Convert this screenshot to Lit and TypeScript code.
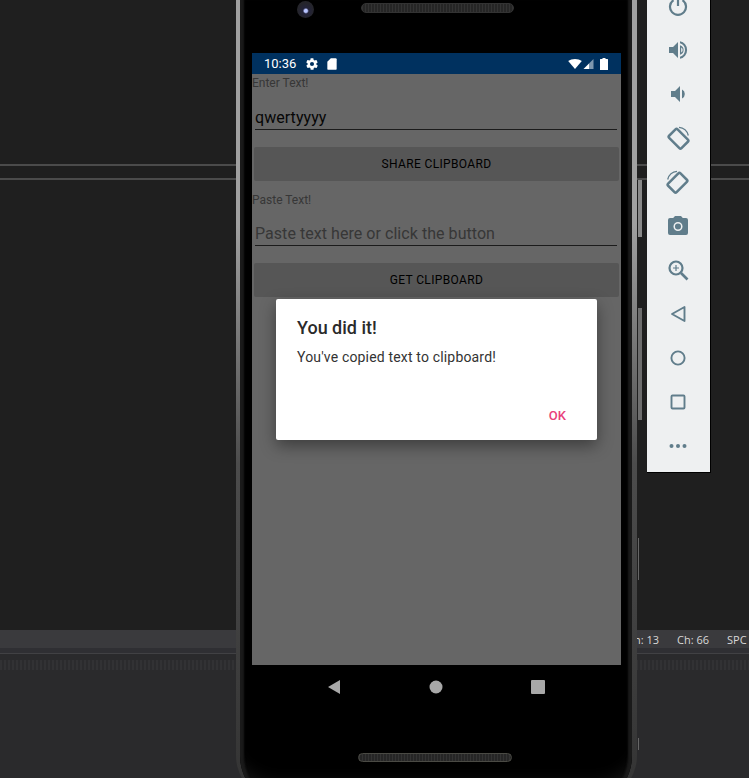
import { LitElement, html, css, svg } from 'lit';
import { customElement } from 'lit/decorators.js';

const rotate = (flip: boolean) => svg`
  <g transform=${flip ? 'translate(24 0) scale(-1 1)' : ''}>
    <rect x="6.500" y="4" width="12" height="17.500" rx="1.500" fill="none" stroke="currentColor" stroke-width="2.500" transform="rotate(-45 12.500 12.750)"/>
    <path d="M13 1.300c4.500.4 8.300 3.700 9.300 8.200" fill="none" stroke="currentColor" stroke-width="1.300"/>
  </g>`;

const toolIcons = [
  svg`<path d="M12 3v9" stroke="currentColor" stroke-width="2.200" fill="none"/><path d="M7.500 6.200a8 8 0 1 0 9 0" stroke="currentColor" stroke-width="2.200" fill="none"/>`,
  svg`<path d="M3 9v6h4l5 5V4L7 9z" fill="currentColor"/><path d="M14 7.200v9.600a5 5 0 0 0 0-9.600zM14 3.200v2.100a7 7 0 0 1 0 13.400v2.100a9 9 0 0 0 0-17.600z" fill="currentColor"/><path d="M15.200 9.400a3 3 0 0 1 0 5.200z" fill="#eef0f1"/>`,
  svg`<path d="M5 9v6h4l5 5V4L9 9z" fill="currentColor"/><path d="M16 7.500v9a5 5 0 0 0 0-9z" fill="currentColor"/>`,
  rotate(false),
  rotate(true),
  svg`<path d="M9 2 7.200 4H4a2 2 0 0 0-2 2v13a2 2 0 0 0 2 2h16a2 2 0 0 0 2-2V6a2 2 0 0 0-2-2h-3.200L15 2z" fill="currentColor"/><circle cx="12" cy="12.500" r="3.800" fill="none" stroke="#eef0f1" stroke-width="1.500"/>`,
  svg`<circle cx="10" cy="10" r="6.500" fill="none" stroke="currentColor" stroke-width="2.200"/><path d="m15 15 6.500 6.500" stroke="currentColor" stroke-width="2.600" fill="none"/><path d="M10 7v6M7 10h6" stroke="currentColor" stroke-width="1.200" fill="none"/>`,
  svg`<path d="M18.500 5v14L6 12z" fill="none" stroke="currentColor" stroke-width="1.900" stroke-linejoin="round"/>`,
  svg`<circle cx="12" cy="12" r="6.600" fill="none" stroke="currentColor" stroke-width="1.900"/>`,
  svg`<rect x="5.500" y="5.500" width="13" height="13" rx="1" fill="none" stroke="currentColor" stroke-width="1.900"/>`,
  svg`<circle cx="5.500" cy="12" r="2" fill="currentColor"/><circle cx="12" cy="12" r="2" fill="currentColor"/><circle cx="18.500" cy="12" r="2" fill="currentColor"/>`,
];

@customElement('app-root')
export class AppRoot extends LitElement {
  static styles = css`
    :host {
      display: block;
      font-family: Roboto, "Liberation Sans", sans-serif;
    }

    .desk {
      position: relative;
      width: 749px;
      height: 778px;
      overflow: hidden;
      background: #1f1f1f;
      display: flex;
      flex-direction: column;
    }

    /* ide behind the emulator */
    .rule {
      height: 2px;
      background: #4b4b4b;
      margin-top: 12px;
    }
    .rule.first {
      margin-top: 164px;
    }
    .ide-gap {
      flex: 1;
    }
    .ide-status {
      height: 18px;
      background: #3a3a3d;
      display: flex;
      justify-content: flex-end;
      align-items: center;
      gap: 18px;
      color: #d8d8d8;
      font: 11px "Open Sans", sans-serif;
    }
    .ide-status .spc {
      width: 22px;
      white-space: nowrap;
      overflow: hidden;
    }
    .ide-panel {
      height: 130px;
      background: #2a2a2c;
      display: flex;
      flex-direction: column;
    }
    .ide-panel .tab {
      height: 5px;
      background: #2f2f33;
      border-bottom: 1px solid #414144;
    }
    .ide-panel .hatch {
      height: 10px;
      margin-top: 6px;
      background: repeating-linear-gradient(90deg, #323234 0 2px, #2b2b2d 2px 4px);
    }

    /* emulator window */
    .phone {
      position: absolute;
      left: 236px;
      top: 0;
      width: 401px;
      height: 800px;
      box-sizing: border-box;
      padding: 0 12px;
      border-style: solid;
      border-color: transparent;
      border-width: 0 5px 0 4px;
      border-radius: 0 0 44px 44px;
      background:
        linear-gradient(#000, #000) padding-box,
        linear-gradient(#a0a0a0 0 28%, #4c4c4c 58%, #333 100%) border-box;
      box-shadow:
        inset 5px 0 2px -1px #1a1a1a,
        inset -5px 0 2px -1px #1a1a1a,
        inset 0 -34px 18px -18px #161616;
      display: flex;
      flex-direction: column;
    }
    .phone-top {
      height: 53px;
      position: relative;
    }
    .speaker {
      position: absolute;
      background: repeating-linear-gradient(90deg, #333 0 1px, #262626 1px 3px);
      border: 1px solid #333;
      border-radius: 5px;
      box-sizing: border-box;
    }
    .speaker.top {
      left: 109px;
      top: 3px;
      width: 153px;
      height: 10px;
    }
    .speaker.bottom {
      left: 106px;
      top: 44px;
      width: 154px;
      height: 9px;
      border-color: #4a4a44;
    }
    .camera {
      position: absolute;
      left: 45px;
      top: 1px;
      width: 17px;
      height: 17px;
      border-radius: 50%;
      background: radial-gradient(circle at 52% 58%, #b8c4ff 0 1.5px, #23233a 3px, #25252b 8px);
    }

    .statusbar {
      width: 369px;
      height: 21px;
      flex: none;
      background: #00315f;
      color: #fff;
      display: flex;
      align-items: center;
      box-sizing: border-box;
      padding: 0 12px;
      font-size: 13px;
    }
    .statusbar svg {
      display: block;
      fill: #fff;
    }
    .statusbar .time {
      margin-right: 9px;
    }
    .statusbar .sd {
      margin-left: 6px;
    }
    .statusbar .signal {
      margin-left: 1px;
    }
    .statusbar .battery {
      margin: 0 1px 0 6px;
    }
    .statusbar .push {
      flex: 1;
    }

    .screen {
      position: relative;
      width: 369px;
      height: 591px;
      flex: none;
      background: #fff;
      display: flex;
      flex-direction: column;
    }
    .label {
      font-size: 12px;
      line-height: 16px;
      color: #8a8a8a;
    }
    .label.first {
      margin-top: 1px;
    }
    .label.second {
      margin-top: 11px;
    }
    .field {
      margin: 13px 4px 0 3px;
      height: 26px;
      box-sizing: border-box;
      padding-top: 1px;
      border-bottom: 1px solid #444;
      font-size: 16px;
      line-height: 26px;
      letter-spacing: 0.05px;
      color: #111;
    }
    .field.hint {
      margin-top: 12px;
      color: #8a8a8a;
    }
    .btn {
      margin: 17px 2px 0 2px;
      height: 34px;
      background: #d6d6d6;
      border-radius: 2px;
      display: flex;
      align-items: center;
      justify-content: center;
      font-size: 12px;
      letter-spacing: 0.35px;
      color: #000;
    }
    .scrim {
      position: absolute;
      inset: 0;
      background: rgba(0, 0, 0, 0.6);
    }
    .dialog {
      position: absolute;
      left: 24px;
      top: 225px;
      width: 321px;
      height: 141px;
      box-sizing: border-box;
      padding: 17px 21px 0;
      background: #fff;
      border-radius: 2px;
      box-shadow: 0 6px 16px rgba(0, 0, 0, 0.4);
      display: flex;
      flex-direction: column;
    }
    .dialog h2 {
      margin: 0;
      font-size: 18px;
      line-height: 24px;
      font-weight: 500;
      color: #2a2a2a;
    }
    .dialog p {
      margin: 7px 0 0;
      font-size: 14px;
      line-height: 20px;
      letter-spacing: 0.17px;
      color: #333;
    }
    .dialog .ok {
      margin: 41px 10px 0 0;
      align-self: flex-end;
      font-size: 13px;
      line-height: 16px;
      font-weight: 500;
      color: #e9407a;
    }

    .navbar {
      width: 369px;
      height: 44px;
      flex: none;
      box-sizing: border-box;
      padding-right: 1px;
      display: flex;
      align-items: center;
      justify-content: center;
      gap: 88px;
    }
    .navbar svg {
      display: block;
      fill: #a8a8a8;
    }
    .chin {
      position: relative;
      flex: 1;
    }

    /* side controls */
    .rail {
      position: absolute;
      left: 638px;
      width: 4px;
      background: #8a8a8a;
    }
    .rail.volume {
      top: 180px;
      height: 57px;
    }
    .rail.power {
      top: 308px;
      height: 112px;
      background: #6e6e6e;
    }
    .rail.low {
      top: 538px;
      height: 42px;
      width: 1px;
      background: #666;
    }
    .rail.end {
      top: 738px;
      height: 12px;
      width: 1px;
      background: #666;
    }
    .tools {
      position: absolute;
      left: 647px;
      top: 0;
      width: 64px;
      height: 473px;
      box-sizing: border-box;
      background: #eef0f1;
      border-right: 1px solid #000;
      border-bottom: 1px solid #000;
      overflow: hidden;
      color: #607d8b;
    }
    .tools .list {
      margin-top: -16px;
      padding-right: 1px;
      display: flex;
      flex-direction: column;
      align-items: center;
    }
    .tools .cell {
      height: 44px;
      display: flex;
      align-items: center;
      justify-content: center;
    }
    .tools svg {
      display: block;
    }
  `;

  render() {
    return html`
      <div class="desk">
        <div class="rule first"></div>
        <div class="rule"></div>
        <div class="ide-gap"></div>
        <div class="ide-status">
          <span>Ln: 13</span><span>Ch: 66</span><span class="spc">SPC</span>
        </div>
        <div class="ide-panel">
          <div class="tab"></div>
          <div class="hatch"></div>
        </div>

        <div class="rail volume"></div>
        <div class="rail power"></div>
        <div class="rail low"></div>
        <div class="rail end"></div>

        <div class="phone">
          <div class="phone-top">
            <div class="camera"></div>
            <div class="speaker top"></div>
          </div>
          <div class="statusbar">
            <span class="time">10:36</span>
            <svg width="14" height="14" viewBox="0 0 24 24"><path d="M19.400 13a7.500 7.500 0 0 0 0-2l2.100-1.600a.5.500 0 0 0 .1-.6l-2-3.500a.5.500 0 0 0-.6-.2l-2.500 1a7.300 7.300 0 0 0-1.700-1l-.4-2.600A.5.500 0 0 0 14 2h-4a.5.500 0 0 0-.5.4l-.4 2.700a7.700 7.700 0 0 0-1.700 1l-2.500-1a.5.500 0 0 0-.6.2l-2 3.500a.5.500 0 0 0 .1.6L4.600 11a7.900 7.900 0 0 0 0 2l-2.100 1.600a.5.500 0 0 0-.1.6l2 3.500c.1.200.4.300.6.200l2.500-1c.5.400 1.100.7 1.700 1l.4 2.600c0 .3.200.5.5.5h4c.2 0 .5-.2.5-.4l.4-2.700c.6-.3 1.200-.6 1.700-1l2.500 1c.2.100.5 0 .6-.2l2-3.500a.5.500 0 0 0-.1-.6zM12 15.500a3.500 3.500 0 1 1 0-7 3.500 3.500 0 0 1 0 7z"/></svg>
            <svg class="sd" width="14" height="14" viewBox="0 0 24 24"><path d="M18 2h-8L4 8v12a2 2 0 0 0 2 2h12a2 2 0 0 0 2-2V4a2 2 0 0 0-2-2z"/></svg>
            <span class="push"></span>
            <svg width="14" height="10" viewBox="0 0 15 11"><path d="M0 2.300C2 .8 4.600 0 7.500 0S13 .8 15 2.300L7.500 11z"/></svg>
            <svg class="signal" width="11" height="10" viewBox="0 0 11 11"><path d="M11 0v11H0z" fill="url(#sig)"/><defs><linearGradient id="sig"><stop offset="0.55" stop-color="#fff"/><stop offset="0.56" stop-color="#7f98af"/></linearGradient></defs></svg>
            <svg class="battery" width="8" height="12" viewBox="0 0 8 12"><path d="M2.500 0h3v1h2a.5.500 0 0 1 .5.500V12H0V1.500A.5.500 0 0 1 .5 1h2z"/></svg>
          </div>
          <div class="screen">
            <div class="label first">Enter Text!</div>
            <div class="field">qwertyyyy</div>
            <div class="btn">SHARE CLIPBOARD</div>
            <div class="label second">Paste Text!</div>
            <div class="field hint">Paste text here or click the button</div>
            <div class="btn">GET CLIPBOARD</div>
            <div class="scrim"></div>
            <div class="dialog">
              <h2>You did it!</h2>
              <p>You've copied text to clipboard!</p>
              <div class="ok">OK</div>
            </div>
          </div>
          <div class="navbar">
            <svg width="14" height="16" viewBox="0 0 14 16"><path d="M13 1v14L1 8z"/></svg>
            <svg width="14" height="14" viewBox="0 0 14 14"><circle cx="7" cy="7" r="6.500"/></svg>
            <svg width="14" height="14" viewBox="0 0 14 14"><rect width="14" height="14" rx="1"/></svg>
          </div>
          <div class="chin"><div class="speaker bottom"></div></div>
        </div>

        <div class="tools">
          <div class="list">
            ${toolIcons.map(
              (icon) => html`<div class="cell"><svg width="24" height="24" viewBox="0 0 24 24">${icon}</svg></div>`
            )}
          </div>
        </div>
      </div>
    `;
  }
}
